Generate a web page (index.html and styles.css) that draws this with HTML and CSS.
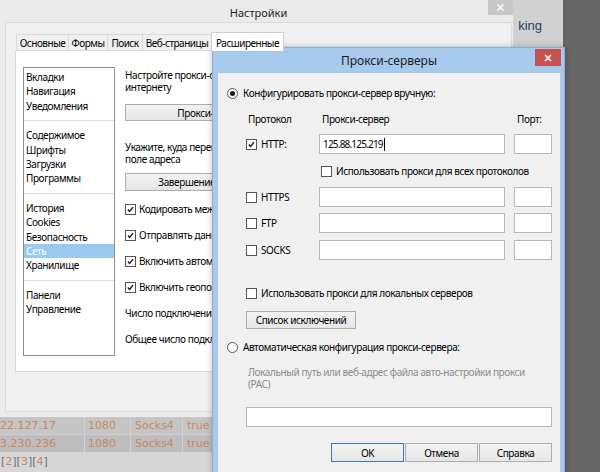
FILE: index.html
```html
<!DOCTYPE html>
<html lang="ru">
<head>
<meta charset="utf-8">
<title>Прокси-серверы</title>
<link rel="stylesheet" href="styles.css">
</head>
<body>
<div class="desktop">

  <div class="webpage">
    <div class="page-main">
      <div class="page-top"><span class="king">king</span></div>
      <div class="ptable">
        <div class="prow r1">
          <div class="pc ip"><span>61.22.127.17</span></div>
          <div class="pc">1080</div>
          <div class="pc">Socks4</div>
          <div class="pc">true</div>
        </div>
        <div class="prow r2">
          <div class="pc ip"><span>183.230.236</span></div>
          <div class="pc">1080</div>
          <div class="pc">Socks4</div>
          <div class="pc">true</div>
        </div>
        <div class="pager">[<span class="pn">2</span>][<span class="pn">3</span>][<span class="pn">4</span>]</div>
      </div>
    </div>
    <div class="page-dark"></div>
  </div>

  <div class="settings">
    <div class="s-title">
      <span>Настройки</span>
      <span class="s-close"><svg width="9" height="9" viewBox="0 0 9 9"><path d="M1.5 1.5 L7.5 7.5 M7.5 1.5 L1.5 7.5" stroke="#fff" stroke-width="1.4"/></svg></span>
    </div>
    <div class="s-client">
      <div class="tabs">
        <div class="tab">Основные</div>
        <div class="tab">Формы</div>
        <div class="tab">Поиск</div>
        <div class="tab">Веб-страницы</div>
        <div class="tab active">Расширенные</div>
      </div>
      <div class="panel">
        <div class="listbox">
          <div class="lgroup first">
            <div class="li">Вкладки</div>
            <div class="li">Навигация</div>
            <div class="li">Уведомления</div>
          </div>
          <div class="lgroup">
            <div class="li">Содержимое</div>
            <div class="li">Шрифты</div>
            <div class="li">Загрузки</div>
            <div class="li">Программы</div>
          </div>
          <div class="lgroup">
            <div class="li">История</div>
            <div class="li">Cookies</div>
            <div class="li">Безопасность</div>
            <div class="li sel">Сеть</div>
            <div class="li">Хранилище</div>
          </div>
          <div class="lgroup last">
            <div class="li">Панели</div>
            <div class="li">Управление</div>
          </div>
        </div>
        <div class="rcol">
          <div class="rcol-in">
            <p class="txt t1">Настройте прокси-серверы для<br>интернету</p>
            <div class="btn wide b1">Прокси-серверы...</div>
            <p class="txt t2">Укажите, куда перенаправлять<br>поле адреса</p>
            <div class="btn wide b2">Завершение ввода адреса</div>
            <div class="crow"><span class="cb on"><svg viewBox="0 0 11 11"><path d="M2.3 5.6 L4.4 7.9 L8.6 2.6" /></svg></span><span>Кодировать международные</span></div>
            <div class="crow"><span class="cb on"><svg viewBox="0 0 11 11"><path d="M2.3 5.6 L4.4 7.9 L8.6 2.6" /></svg></span><span>Отправлять данные</span></div>
            <div class="crow"><span class="cb on"><svg viewBox="0 0 11 11"><path d="M2.3 5.6 L4.4 7.9 L8.6 2.6" /></svg></span><span>Включить автоматическое</span></div>
            <div class="crow"><span class="cb on"><svg viewBox="0 0 11 11"><path d="M2.3 5.6 L4.4 7.9 L8.6 2.6" /></svg></span><span>Включить геопозиционирование</span></div>
            <div class="crow"><span>Число подключений к серверу</span></div>
            <div class="crow"><span>Общее число подключений</span></div>
          </div>
        </div>
      </div>
    </div>
  </div>

  <div class="proxy">
    <div class="p-title">
      <span>Прокси-серверы</span>
      <span class="p-close"><svg width="10" height="10" viewBox="0 0 10 10"><path d="M2 2 L8 8 M8 2 L2 8" stroke="#fff" stroke-width="1.6"/></svg></span>
    </div>
    <div class="p-body">
      <div class="rrow r-manual"><span class="radio on"></span><span>Конфигурировать прокси-сервер вручную:</span></div>
      <div class="proto">
        <div class="grow ghead">
          <span class="h1">Протокол</span>
          <span class="h2">Прокси-сервер</span>
          <span class="h3">Порт:</span>
        </div>
        <div class="grow gin g-http">
          <label class="pl"><span class="cb on"><svg viewBox="0 0 11 11"><path d="M2.3 5.6 L4.4 7.9 L8.6 2.6" /></svg></span><span>HTTP:</span></label>
          <div class="inp"><span class="val">125.88.125.219</span><span class="caret"></span></div>
          <div class="inp port"></div>
        </div>
        <div class="grow g-all">
          <span></span>
          <label class="pl sub"><span class="cb"></span><span>Использовать прокси для всех протоколов</span></label>
        </div>
        <div class="grow gin g-https">
          <label class="pl"><span class="cb"></span><span>HTTPS</span></label>
          <div class="inp"></div>
          <div class="inp port"></div>
        </div>
        <div class="grow gin g-ftp">
          <label class="pl"><span class="cb"></span><span>FTP</span></label>
          <div class="inp"></div>
          <div class="inp port"></div>
        </div>
        <div class="grow gin g-socks">
          <label class="pl"><span class="cb"></span><span>SOCKS</span></label>
          <div class="inp"></div>
          <div class="inp port"></div>
        </div>
        <label class="pl local"><span class="cb"></span><span>Использовать прокси для локальных серверов</span></label>
        <div class="btn exc">Список исключений</div>
      </div>
      <div class="rrow r-auto"><span class="radio"></span><span>Автоматическая конфигурация прокси-сервера:</span></div>
      <p class="hint">Локальный путь или веб-адрес файла авто-настройки прокси<br>(PAC)</p>
      <div class="inp pac"></div>
      <div class="dlg-btns">
        <div class="btn dbtn def">OK</div>
        <div class="btn dbtn">Отмена</div>
        <div class="btn dbtn">Справка</div>
      </div>
    </div>
  </div>

</div>
</body>
</html>
```
FILE: styles.css
```css
* { box-sizing: border-box; }
html, body { margin: 0; padding: 0; }
body {
  font-family: "Noto Sans", "Liberation Sans", sans-serif;
  font-size: 10px;
  letter-spacing: -0.4px;
  color: #000;
  background: #d2d2d2;
}
p { margin: 0; }
label { display: flex; }

.desktop {
  position: relative;
  width: 600px;
  height: 472px;
  overflow: hidden;
}

/* ---------- background web page ---------- */
.webpage {
  position: absolute;
  inset: 0;
  display: grid;
  grid-template-columns: 563px 37px;
}
.page-main {
  background: #d1d1d1;
  display: flex;
  flex-direction: column;
}
.page-dark { background: #666666; }
.page-top {
  display: flex;
  justify-content: flex-end;
  padding: 18px 21px 0 0;
}
.king {
  font: 13px/15px "Liberation Sans", sans-serif;
  letter-spacing: 0;
  color: #2b3c62;
}
.ptable { margin-top: auto; }
.prow {
  display: grid;
  grid-template-columns: 85px 46px 52px 1fr;
  height: 17px;
  font: 11px/17px "DejaVu Sans", sans-serif;
  letter-spacing: 0;
  color: #c9885f;
}
.prow.r1 { background: #c5c5c5; }
.prow.r2 { background: #bdbdbd; height: 18px; line-height: 18px; border-top: 1px solid #d0d0d0; }
.pc {
  border-right: 1px solid #d2d2d2;
  padding-left: 3px;
  white-space: nowrap;
  overflow: hidden;
}
.pc:nth-child(3) { padding-left: 4px; }
.pc:nth-child(4) { padding-left: 4px; border-right: 0; }
.pc.ip {
  display: flex;
  justify-content: flex-end;
  padding: 0 28px 0 0;
}
.pager {
  height: 20px;
  background: #d6d6d6;
  font: 11px/20px "DejaVu Sans", sans-serif;
  letter-spacing: 0;
  color: #707070;
  padding-left: 1px;
}
.pn { color: #c9885f; }

/* ---------- settings window ---------- */
.settings {
  position: absolute;
  left: 0;
  top: 0;
  width: 513px;
  height: 417px;
  background: #ebebeb;
  padding: 0 1px 5px 5px;
  display: flex;
  flex-direction: column;
}
.s-title {
  position: relative;
  height: 22px;
  display: flex;
  align-items: center;
  justify-content: center;
  padding-top: 2px;
  font-size: 11px;
  letter-spacing: 0;
  color: #1e1e1e;
}
.s-close {
  position: absolute;
  top: 0;
  right: -1px;
  width: 25px;
  height: 15px;
  background: #c7c7c7;
  display: flex;
  align-items: center;
  justify-content: center;
}
.s-client {
  flex: 1;
  border: 1px solid #dadada;
  background: #f0f0f0;
  padding: 9px 6px 0 9px;
  display: flex;
  flex-direction: column;
}
.tabs {
  display: flex;
  align-items: flex-end;
  margin-left: 1px;
  position: relative;
  z-index: 1;
}
.tab {
  height: 16px;
  border: 1px solid #d9d9d9;
  border-bottom: 0;
  margin-right: -1px;
  background: #f0f0f0;
  line-height: 16px;
  text-align: center;
  white-space: nowrap;
  letter-spacing: -0.5px;
}
.tab:nth-child(1) { width: 53px; }
.tab:nth-child(2) { width: 40px; }
.tab:nth-child(3) { width: 36px; }
.tab:nth-child(4) { width: 70px; }
.tab:nth-child(5) { width: 73px; }
.tab.active {
  height: 19px;
  margin-bottom: -1px;
  padding-top: 2px;
  background: #fff;
  border-color: #d0d0d0;
}
.panel {
  height: 322px;
  background: #fff;
  border: 1px solid #d9d9d9;
  padding: 16px 0 0 7px;
  display: flex;
  gap: 10px;
}
.listbox {
  width: 92px;
  height: 289px;
  flex: none;
  border: 1px solid #8d8d8d;
  background: #fff;
}
.lgroup {
  padding: 7px 0;
  border-top: 1px solid #dcdcdc;
}
.lgroup.first { padding-top: 2px; border-top: 0; }
.li {
  height: 14.4px;
  line-height: 14.4px;
  padding-left: 2px;
  white-space: nowrap;
}
.li.sel {
  background: #99c9ef;
  color: #fff;
}
/* the right column runs on under the proxy dialog; only its left part shows */
.rcol {
  width: 87px;
  flex: none;
  overflow: hidden;
}
.rcol-in {
  width: 186px;
  display: flex;
  flex-direction: column;
  white-space: nowrap;
}
.txt { line-height: 12px; }
.t1 { margin-top: 1.5px; }
.t2 { margin-top: 19.5px; }
.btn {
  display: flex;
  align-items: center;
  justify-content: center;
  background: linear-gradient(#f3f3f3, #e6e6e6);
  border: 1px solid #adadad;
  white-space: nowrap;
}
.wide { height: 17px; }
.b1 { margin-top: 11.5px; }
.b2 { margin-top: 8.5px; height: 18px; }
.crow {
  height: 26px;
  display: flex;
  align-items: center;
  gap: 3px;
}
.b2 + .crow { margin-top: 5px; }

/* checkbox / radio */
.cb {
  width: 11px;
  height: 11px;
  flex: none;
  background: #fff;
  border: 1px solid #555;
  display: inline-flex;
}
.cb svg { width: 9px; height: 9px; }
.cb svg path { fill: none; stroke: #1a1a1a; stroke-width: 1.7; }
.radio {
  width: 11px;
  height: 11px;
  flex: none;
  border-radius: 50%;
  border: 1px solid #555;
  background: #fff;
  display: inline-flex;
  align-items: center;
  justify-content: center;
}
.radio.on::after {
  content: "";
  width: 5px;
  height: 5px;
  border-radius: 50%;
  background: #1a1a1a;
}

/* ---------- proxy dialog ---------- */
.proxy {
  position: absolute;
  left: 212px;
  top: 47px;
  width: 353px;
  height: 440px;
  background: #a6c9ec;
  border: 1px solid #86afdc;
  padding: 0 4px 5px 5px;
  display: flex;
  flex-direction: column;
  box-shadow: 0 0 6px rgba(0, 0, 0, 0.25);
}
.p-title {
  position: relative;
  height: 25px;
  display: flex;
  align-items: center;
  justify-content: center;
  font-size: 12px;
  letter-spacing: 0;
  color: #1a1a1a;
}
.p-close {
  position: absolute;
  top: 1px;
  right: -1px;
  width: 26px;
  height: 17px;
  background: #c75050;
  display: flex;
  align-items: center;
  justify-content: center;
}
.p-body {
  flex: 1;
  background: #f0f0f0;
  padding: 0 7px 0 9px;
  display: flex;
  flex-direction: column;
  white-space: nowrap;
}
.rrow {
  height: 14px;
  display: flex;
  align-items: center;
  gap: 5px;
}
.r-manual { margin-top: 13px; }
.proto {
  padding-left: 19px;
  display: flex;
  flex-direction: column;
  align-items: flex-start;
}
.grow {
  display: grid;
  grid-template-columns: 73px 195px 38px;
  align-items: center;
}
.ghead { height: 14px; margin-top: 12px; }
.h1 { padding-left: 2px; }
.h2 { padding-left: 3px; }
.h3 { padding-left: 3px; }
.gin { height: 20px; }
.g-http { margin-top: 8px; }
.g-all { height: 14px; margin-top: 10px; }
.g-https { margin-top: 9px; }
.g-ftp { margin-top: 6px; }
.g-socks { margin-top: 7px; }
.pl {
  align-items: center;
  gap: 4px;
}
.pl.sub { padding-left: 2px; }
.inp {
  width: 186px;
  height: 20px;
  background: #fff;
  border: 1px solid #b8b8b8;
  display: flex;
  align-items: center;
  padding-left: 3px;
}
.inp.port { width: 38px; }
.val { letter-spacing: -0.8px; }
.caret {
  width: 1px;
  height: 13px;
  background: #000;
  margin-left: 1px;
}
.local { height: 14px; margin-top: 26px; }
.exc {
  width: 110px;
  height: 18px;
  margin-top: 11px;
}
.r-auto { margin-top: 11px; }
.hint {
  margin-top: 11.5px;
  padding-left: 21px;
  line-height: 12px;
  color: #8c8c8c;
}
.pac {
  width: 306px;
  margin: 17.5px 0 0 19px;
}
.dlg-btns {
  display: flex;
  justify-content: flex-end;
  gap: 1px;
  margin: 16px 1px 0 0;
}
.dbtn {
  width: 73px;
  height: 19px;
}
.dbtn.def { border-color: #3d7bbf; }
```
